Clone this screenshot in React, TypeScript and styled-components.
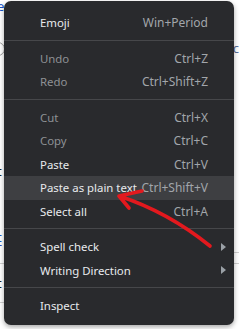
import styled, { createGlobalStyle } from "styled-components";

const GlobalStyle = createGlobalStyle`
  html, body {
    margin: 0;
    padding: 0;
    background: #ffffff;
    overflow: hidden;
  }
  body {
    font-family: "Segoe UI", "Noto Sans", "Liberation Sans", sans-serif;
  }
`;

const Page = styled.div`
  position: relative;
  width: 239px;
  height: 329px;
  overflow: hidden;
  background: #ffffff;
`;

// background page, only its edges show around the menu
const BgLines = styled.div`
  display: flex;
  flex-direction: column;
`;

type RuleSide = "left" | "right" | "both";

interface BgRowProps {
  $h: number;
  $rule?: RuleSide;
}

const ruleImage = (side?: RuleSide) => {
  if (side === "left") return "linear-gradient(to right, #d0d0d0 0 6px, transparent 6px) 1";
  if (side === "right") return "linear-gradient(to left, #d0d0d0 0 6px, transparent 6px) 1";
  if (side === "both")
    return "linear-gradient(to right, #d0d0d0 0 6px, transparent 6px 233px, #d0d0d0 233px) 1";
  return "none";
};

const BgRow = styled.div<BgRowProps>`
  height: ${(p) => p.$h}px;
  box-sizing: border-box;
  display: flex;
  align-items: center;
  justify-content: space-between;
  font-family: "Noto Sans", sans-serif;
  font-size: 13px;
  line-height: 1;
  border-bottom: 1px solid transparent;
  border-image: ${(p) => ruleImage(p.$rule)};
`;

interface FragProps {
  $color?: string;
  $underline?: boolean;
}

const Frag = styled.span<FragProps>`
  color: ${(p) => p.$color || "#202124"};
  text-decoration: ${(p) => (p.$underline ? "underline" : "none")};
  text-underline-offset: 3px;
  margin-left: -3px;
`;

const Ring = styled.span`
  width: 12px;
  height: 12px;
  border-radius: 50%;
  border: 1.5px solid #9a9a9a;
  margin-left: -9px;
`;

const Menu = styled.div`
  position: absolute;
  left: 4px;
  top: 1px;
  width: 230px;
  box-sizing: border-box;
  padding: 10px 0 7px;
  background: #292a2d;
  border-radius: 7px;
  box-shadow: 0 2px 5px rgba(0, 0, 0, 0.35);
  font-size: 12px;
`;

interface RowProps {
  $disabled?: boolean;
  $active?: boolean;
}

const Row = styled.div<RowProps>`
  height: 23.5px;
  display: grid;
  grid-template-columns: 1fr auto 18px;
  align-items: center;
  padding: 0 8px 0 36px;
  background: ${(p) => (p.$active ? "#3e3f42" : "transparent")};
  color: ${(p) => (p.$disabled ? "#8e9195" : "#e8eaed")};
  white-space: nowrap;
`;

const Label = styled.span`
  font-size: 11.4px;
`;

const Shortcut = styled.span`
  color: #a2a6ab;
`;

const SubArrow = styled.span`
  justify-self: end;
  width: 0;
  height: 0;
  border-top: 4px solid transparent;
  border-bottom: 4px solid transparent;
  border-left: 5px solid #9aa0a6;
`;

const Separator = styled.div`
  height: 1px;
  margin: 5px 0 6px;
  background: #46474a;
`;

const Annotation = styled.svg`
  position: absolute;
  left: 0;
  top: 0;
  pointer-events: none;
`;

interface Item {
  label: string;
  shortcut?: string;
  disabled?: boolean;
  active?: boolean;
  submenu?: boolean;
}

const groups: Item[][] = [
  [{ label: "Emoji", shortcut: "Win+Period" }],
  [
    { label: "Undo", shortcut: "Ctrl+Z", disabled: true },
    { label: "Redo", shortcut: "Ctrl+Shift+Z", disabled: true },
  ],
  [
    { label: "Cut", shortcut: "Ctrl+X", disabled: true },
    { label: "Copy", shortcut: "Ctrl+C", disabled: true },
    { label: "Paste", shortcut: "Ctrl+V" },
    { label: "Paste as plain text", shortcut: "Ctrl+Shift+V", active: true },
    { label: "Select all", shortcut: "Ctrl+A" },
  ],
  [
    { label: "Spell check", submenu: true },
    { label: "Writing Direction", submenu: true },
  ],
  [{ label: "Inspect" }],
];

const App = () => {
  return (
    <Page>
      <GlobalStyle />
      <BgLines>
        <BgRow $h={14}>
          <Frag $color="#1a56c9">e</Frag>
        </BgRow>
        <BgRow $h={70}>
          <Ring />
          <Frag $color="#5a6f9a">c</Frag>
        </BgRow>
        <BgRow $h={72} />
        <BgRow $h={32}>
          <Frag>t</Frag>
        </BgRow>
        <BgRow $h={34} />
        <BgRow $h={31} $rule="right">
          <Frag $color="#1a56c9" $underline>
            t
          </Frag>
        </BgRow>
        <BgRow $h={11} $rule="both" />
        <BgRow $h={39} $rule="left">
          <Frag>t</Frag>
        </BgRow>
      </BgLines>

      <Menu>
        {groups.map((group, gi) => (
          <div key={gi}>
            {gi > 0 && <Separator />}
            {group.map((item) => (
              <Row key={item.label} $disabled={item.disabled} $active={item.active}>
                <Label>{item.label}</Label>
                <Shortcut>{item.shortcut}</Shortcut>
                {item.submenu ? <SubArrow /> : <span />}
              </Row>
            ))}
          </div>
        ))}
      </Menu>

      <Annotation width="239" height="329" viewBox="0 0 239 329">
        <path
          d="M210 246 Q168 212 119 196 M142 191 L119 196 L129 208"
          fill="none"
          stroke="#e3191e"
          strokeWidth="3.6"
          strokeLinecap="round"
          strokeLinejoin="round"
        />
      </Annotation>
    </Page>
  );
};

export default App;
